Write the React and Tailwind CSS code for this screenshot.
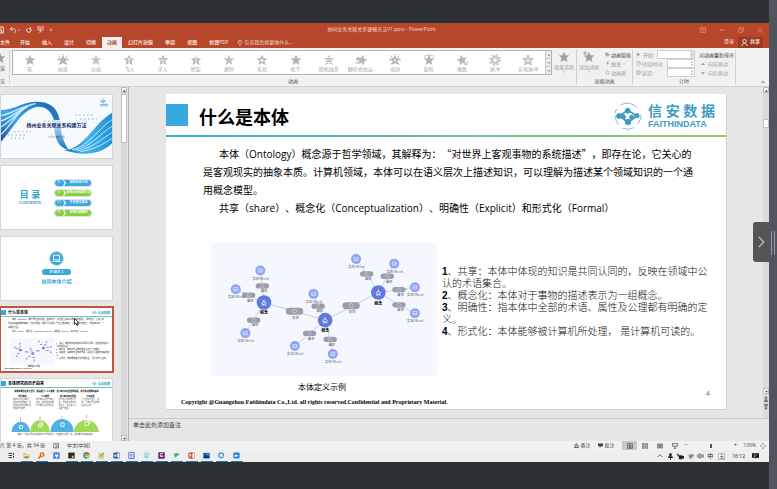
import React from "react";

const STAR = "M12 1.5l3.1 7 7.6.7-5.8 5 1.8 7.6L12 17.8l-6.7 4 1.8-7.6-5.8-5 7.6-.7z";

function Star({ className = "size-3", outline = false, children }) {
  return (
    <svg viewBox="0 0 24 24" className={className} fill={outline ? "none" : "currentColor"} stroke={outline ? "currentColor" : "none"} strokeWidth="2">
      <path d={STAR} />
      {children}
    </svg>
  );
}

const rays = <path d="M3 3l4 4M21 3l-4 4M3 21l4-4M21 21l-4-4M0 12h4M20 12h4M12 -1v3" stroke="currentColor" strokeWidth="2" />;

const effects = [
  { name: "无", icon: <Star /> },
  { name: "出现", icon: <Star>{rays}</Star> },
  { name: "淡出", icon: <Star className="size-3 opacity-70" /> },
  { name: "飞入", icon: <Star><path d="M12 18V9M9 12l3-3 3 3" stroke="#fff" strokeWidth="2" fill="none" /></Star> },
  { name: "浮入", icon: <Star><path d="M7 12h10M9 16h6" stroke="#fff" strokeWidth="2" /></Star> },
  { name: "劈裂", icon: <Star><path d="M12 2v17" stroke="#fff" strokeWidth="2" /></Star> },
  { name: "擦除", icon: <Star className="size-3 opacity-80" /> },
  { name: "形状", icon: <Star><circle cx="12" cy="13" r="3" fill="#fff" /></Star> },
  { name: "轮子", icon: <Star /> },
  { name: "随机线条", icon: <Star><path d="M2 7h20M2 12h20M2 17h20" stroke="#fff" strokeWidth="1.500" /></Star> },
  { name: "翻转式由远...", icon: <Star className="size-3 rotate-12"><path d="M-1 12l5-3v6zM0 20h6" stroke="currentColor" fill="currentColor" strokeWidth="2" /></Star> },
  { name: "缩放", icon: <Star>{rays}<circle cx="12" cy="13" r="2" fill="#fff" /></Star> },
  { name: "旋转", icon: <Star><path d="M3 7c1-6 7-6 9-3 2-3 8-3 9 3" stroke="currentColor" strokeWidth="2" fill="none" /></Star> },
  { name: "弹跳", icon: <Star className="size-3 -rotate-12"><path d="M15 21l3 3 6-8" stroke="currentColor" strokeWidth="2" fill="none" /></Star> },
  {
    name: "脉冲",
    icon: (
      <svg viewBox="0 0 24 24" className="size-3 opacity-70" fill="none" stroke="currentColor">
        <circle cx="12" cy="12" r="6" strokeWidth="5" />
        <circle cx="12" cy="12" r="10" strokeWidth="4" strokeDasharray="4 3.85" />
      </svg>
    ),
  },
  { name: "彩色脉冲", icon: <Star outline><path d="M12 7l1.5 4 4 .3-3 2.600 1 4-3.500-2-3.500 2 1-4-3-2.600 4-.3z" strokeWidth="1.500" /></Star> },
];

const tabs = ["文件", "开始", "插入", "设计", "切换", "动画", "幻灯片放映", "审阅", "视图", "新建PDF"];

const tabStyle = {
  文件: "pr-1 pt-px font-medium whitespace-nowrap",
  动画: "mt-px bg-[#f1f1f1] px-[5px] font-bold whitespace-nowrap text-[#b7472a]",
};

function TitleBar() {
  return (
    <div className="flex h-[13px] items-center text-[#f6d9d0]">
      <div className="flex flex-1 items-center gap-[5px]">
        <button aria-label="保存" className="-ml-1">
          <svg viewBox="0 0 24 24" className="size-2" fill="none" stroke="currentColor" strokeWidth="3"><path d="M2 3h20v18H2zM7 21v-7h10v7M7 3v6h10" /></svg>
        </button>
        <button aria-label="撤消">
          <svg viewBox="0 0 36 24" className="h-2 w-3" fill="none" stroke="currentColor" strokeWidth="3"><path d="M10 3L4 9l6 6M4 9h10c8 0 8 11 1 12" /><path d="M27 11h6l-3 4z" fill="currentColor" stroke="none" /></svg>
        </button>
        <button aria-label="恢复">
          <svg viewBox="0 0 24 24" className="size-[6px]" fill="none" stroke="currentColor" strokeWidth="4"><path d="M6 5a9 9 0 1 0 12 1M18 1v7h-7" /></svg>
        </button>
        <button aria-label="从头开始放映">
          <svg viewBox="0 0 24 24" className="size-[7px]" fill="none" stroke="currentColor" strokeWidth="2.500"><path d="M1 3h22M3 3v11h18V3M12 14v5M7 22l5-3 5 3M9 7l6 2-6 3z" /></svg>
        </button>
        <button aria-label="自定义快速访问工具栏">
          <svg viewBox="0 0 12 12" className="size-1" fill="currentColor"><path d="M1 2h10v2H1zM2 6h8l-4 4z" /></svg>
        </button>
      </div>
      <h1 className="text-[5px]">协同业务关联关系建模方法V1.pptx - PowerPoint</h1>
      <div className="flex flex-1 items-center justify-end gap-[13px] pr-[6px] text-[#d58a76]">
        <button aria-label="功能区显示选项"><svg viewBox="0 0 12 12" className="size-[6px]" fill="none" stroke="currentColor" strokeWidth="1.500"><path d="M1 1h10v10H1zM1 4h10M6 10V6M4 7l2-2 2 2" /></svg></button>
        <button aria-label="最小化"><svg viewBox="0 0 12 12" className="size-[6px]" stroke="currentColor" strokeWidth="2"><path d="M1 6h10" /></svg></button>
        <button aria-label="还原"><svg viewBox="0 0 12 12" className="size-[6px]" fill="none" stroke="currentColor" strokeWidth="1.500"><path d="M1 4h7v7H1zM4 4V1h7v7H8" /></svg></button>
        <button aria-label="关闭"><svg viewBox="0 0 12 12" className="size-[6px]" stroke="currentColor" strokeWidth="1.500"><path d="M1 1l10 10M11 1L1 11" /></svg></button>
      </div>
    </div>
  );
}

function TabBar() {
  return (
    <div className="flex h-3 items-stretch text-[5px] text-[#fbe9e4]">
      <nav className="flex">
        {tabs.map((t) => (
          <button key={t} className={tabStyle[t] ?? "px-[6px] pt-px font-medium whitespace-nowrap"}>
            {t}
          </button>
        ))}
      </nav>
      <label className="ml-1 flex items-center gap-[2px] pt-px">
        <svg viewBox="0 0 12 18" className="h-[6px] w-1" fill="none" stroke="currentColor" strokeWidth="2"><path d="M4 12c0-2-3-3-3-6a5 5 0 0 1 10 0c0 3-3 4-3 6zM4 16h4" /></svg>
        <input aria-label="操作说明搜索" placeholder="告诉我您想要做什么..." className="w-16 bg-transparent p-0 outline-none placeholder:text-[#f3cfc5]" />
      </label>
      <div className="ml-auto flex items-center pr-[6px]">
        <button className="mr-1">登录</button>
        <button className="flex h-[11px] items-center gap-[2px] bg-[#9a3a20] px-[3px] font-bold">
          <svg viewBox="0 0 16 16" className="size-[7px]" fill="none" stroke="currentColor" strokeWidth="2"><circle cx="8" cy="5" r="4" /><path d="M2 16c0-8 12-8 12 0" /></svg>
          共享
        </button>
      </div>
    </div>
  );
}

function GroupLabel({ children }) {
  return <div className="flex flex-1 items-center justify-center text-[5px] text-[#555]">{children}</div>;
}

function Spin({ id, label, children }) {
  return (
    <div className="flex h-[9px] items-center gap-px">
      {children}
      <label htmlFor={id} className="flex-1 whitespace-nowrap text-[#a0a0a0]">{label}</label>
      <div className="flex h-[9px] w-7 shrink-0 items-center border border-[#d0d0d0] bg-white">
        <input id={id} className="w-5 bg-transparent outline-none" />
        <svg viewBox="0 0 8 16" className="ml-auto h-[7px] w-1 text-[#aaa]" fill="currentColor"><path d="M1 6l3-4 3 4zM1 10h6l-3 4z" /></svg>
      </div>
    </div>
  );
}

function Ribbon() {
  return (
    <div className="flex h-[39px] border-b border-[#d2d2d2] bg-[#f1f1f1] text-[5px] leading-[6px] text-[#a0a0a0]">
      <div className="my-[2px] flex w-[10px] flex-col items-start overflow-hidden border-r border-[#d0d0d0]">
        <Star className="mt-[2px] -ml-[6px] size-3 shrink-0" />
        <span className="mt-px text-[#555]">览</span>
        <span className="mt-auto text-[#777]">览</span>
      </div>
      <div className="flex min-w-0 flex-1 flex-col pt-[2px]">
        <div className="flex h-[25px]">
          <div className="ml-[2px] flex min-w-0 flex-1 border border-[#b4b4b4] bg-white">
            <div className="flex min-w-0 flex-1">
              {effects.map((e) => (
                <button key={e.name} className="flex min-w-0 flex-1 basis-0 flex-col items-center justify-center whitespace-nowrap text-[#a8a8a8]">
                  <span className="text-[#b4b4b4]">{e.icon}</span>
                  {e.name}
                </button>
              ))}
            </div>
            <div className="flex w-[6px] flex-col border-l border-[#c8c8c8] bg-[#ececec]">
              {["上一行", "下一行", "更多效果"].map((n) => (
                <button key={n} aria-label={n} className="flex flex-1 items-center justify-center border-b border-[#d0d0d0] last:border-0">
                  <svg viewBox="0 0 8 8" className="size-1" fill="currentColor"><path d={n === "上一行" ? "M1 6l3-4 3 4z" : "M1 2h6L4 6z"} /></svg>
                </button>
              ))}
            </div>
          </div>
          <button className="flex w-6 flex-col items-center gap-px pt-px whitespace-nowrap">
            <Star className="size-3 shrink-0" />
            效果选项
            <svg viewBox="0 0 8 8" className="size-[2px]" fill="currentColor"><path d="M0 2h8L4 7z" /></svg>
          </button>
        </div>
        <GroupLabel>动画</GroupLabel>
      </div>
      <div className="my-[2px] flex w-14 flex-col border-l border-[#d0d0d0]">
        <div className="flex h-[27px] gap-1">
          <button className="flex w-6 shrink-0 flex-col items-center gap-px pt-px whitespace-nowrap">
            <Star className="size-3 shrink-0"><path d="M0 4h8M4 0v8" stroke="currentColor" strokeWidth="2" /></Star>
            添加动画
            <svg viewBox="0 0 8 8" className="size-[2px]" fill="currentColor"><path d="M0 2h8L4 7z" /></svg>
          </button>
          <div className="flex flex-col justify-around whitespace-nowrap">
            <button className="flex items-center gap-px text-[#444]">
              <svg viewBox="0 0 16 16" className="size-[5px]" fill="none" stroke="#35689b" strokeWidth="2"><path d="M4 2v12M1 5h6M9 3v11M9 9h6" /></svg>
              动画窗格
            </button>
            <button className="flex items-center gap-px">
              <svg viewBox="0 0 16 16" className="size-[5px]" fill="currentColor"><path d="M9 0L4 9h4l-2 7 7-10H9l3-6z" /></svg>
              触发
              <svg viewBox="0 0 8 8" className="ml-px size-[2px]" fill="currentColor"><path d="M0 2h8L4 7z" /></svg>
            </button>
            <button className="flex items-center gap-px"><Star className="size-[5px]" outline />动画刷</button>
          </div>
        </div>
        <GroupLabel>高级动画</GroupLabel>
      </div>
      <div className="my-[2px] flex w-[103px] flex-col border-l border-[#d0d0d0]">
        <div className="flex h-[27px] gap-1 pl-[3px]">
          <div className="flex w-[59px] shrink-0 flex-col">
            <div className="flex h-[9px] items-center gap-px">
              <svg viewBox="0 0 12 12" className="size-[5px] shrink-0" fill="currentColor"><path d="M2 1l9 5-9 5z" /></svg>
              <label htmlFor="start" className="flex-1 pl-px whitespace-nowrap">开始:</label>
              <div className="flex h-[9px] w-[38px] shrink-0 items-stretch border border-[#d0d0d0] bg-white">
                <select id="start" className="min-w-0 flex-1 appearance-none bg-transparent p-0"><option></option></select>
                <span className="flex w-1 items-center justify-center bg-[#e2e2e2]">
                  <svg viewBox="0 0 8 8" className="size-[2px]" fill="currentColor"><path d="M0 2h8L4 7z" /></svg>
                </span>
              </div>
            </div>
            <Spin id="duration" label="持续时间:">
              <svg viewBox="0 0 12 12" className="size-[5px] shrink-0" fill="none" stroke="currentColor" strokeWidth="1.500"><circle cx="6" cy="6" r="5" /><path d="M6 3v3h3" /></svg>
            </Spin>
            <Spin id="delay" label="延迟:">
              <svg viewBox="0 0 12 12" className="size-[5px] shrink-0" fill="none" stroke="currentColor" strokeWidth="1.500"><circle cx="6" cy="6" r="5" /><path d="M5 3v6M7 3v6" /></svg>
            </Spin>
          </div>
          <div className="flex flex-col justify-around whitespace-nowrap">
            <span className="text-[#444]">对动画重新排序</span>
            <button className="flex items-center gap-[3px] pl-[2px]"><svg viewBox="0 0 8 8" className="size-1" fill="currentColor"><path d="M0 6l4-5 4 5z" /></svg>向前移动</button>
            <button className="flex items-center gap-[3px] pl-[2px]"><svg viewBox="0 0 8 8" className="size-1" fill="currentColor"><path d="M0 2h8L4 7z" /></svg>向后移动</button>
          </div>
        </div>
        <GroupLabel>计时</GroupLabel>
      </div>
      <div className="my-[2px] flex w-[34px] items-end justify-end border-l border-[#d0d0d0] pr-1">
        <button aria-label="折叠功能区"><svg viewBox="0 0 12 12" className="size-1" fill="none" stroke="#444" strokeWidth="2.500"><path d="M1 9l5-5 5 5" /></svg></button>
      </div>
    </div>
  );
}

function LogoMark({ className }) {
  return (
    <svg viewBox="0 0 84 84" className={className} fill="#3d9cc4" stroke="#3d9cc4">
      <path d="M20 9a38 38 0 0 1 50 9M3 34a39 39 0 0 1 5-13M3 40a39 39 0 0 0 12 28M81 38a40 40 0 0 1-9 27M26 79a40 40 0 0 0 34-2" fill="none" strokeWidth="2" />
      <path d="M36 28L16 42M46 28l22 13M18 42l22 18M68 42L44 60" strokeWidth="5" fill="none" />
      <circle cx="41" cy="26" r="8" />
      <circle cx="15" cy="42" r="8" />
      <circle cx="69" cy="41" r="7" />
      <circle cx="42" cy="60" r="9" />
      <circle cx="29" cy="44" r="7" />
      <circle cx="53" cy="46" r="7" />
      <circle cx="37" cy="39" r="4" fill="#fff" stroke="none" />
      <circle cx="47" cy="36" r="3" fill="#fff" stroke="none" />
      <circle cx="41" cy="48" r="3" fill="#fff" stroke="none" />
    </svg>
  );
}

const hubs = [[177, 203], [361, 256], [521, 173]];
const relations = [[269, 229], [439, 212]];
const leaves = [
  { hub: 0, at: [166, 107], via: [172, 153] },
  { hub: 0, at: [92, 163], via: [131, 181] },
  { hub: 0, at: [121, 295], via: [146, 256] },
  { hub: 1, at: [326, 177], via: [340, 214] },
  { hub: 1, at: [270, 334], via: [314, 296] },
  { hub: 1, at: [384, 358], via: [376, 314] },
  { hub: 2, at: [454, 72], via: [486, 117] },
  { hub: 2, at: [569, 86], via: [548, 124] },
  { hub: 2, at: [631, 157], via: [583, 164] },
  { hub: 2, at: [631, 235], via: [583, 210] },
];

function OntologyGraph({ className, labels = true }) {
  return (
    <svg viewBox="18 24 679 400" className={className} textAnchor="middle">
      <rect x="18" y="24" width="679" height="400" fill="#f4f7fe" />
      <path d="M177 203L361 256L521 173" stroke="#b4b8c4" strokeWidth="2" fill="none" />
      {leaves.map(({ hub, at, via }) => (
        <g key={at.join()}>
          <path d={`M${hubs[hub].join(" ")}L${via.join(" ")}L${at.join(" ")}`} stroke="#bcc0cc" strokeWidth="2" fill="none" />
          <rect x={via[0] - 20} y={via[1] - 8} width="40" height="16" rx="8" fill="#9a9dab" />
          <circle cx={via[0]} cy={via[1]} r="5" fill="none" stroke="#d5d7de" strokeWidth="1.500" />
          <circle cx={at[0]} cy={at[1]} r="15" fill="#8fa5f3" />
          <path d={`M${at[0] - 6} ${at[1] - 5}h12v10h-12zM${at[0] - 5} ${at[1] + 1}h10`} fill="none" stroke="#e9eefe" strokeWidth="2" />
          {labels && <text x={via[0] + 5} y={via[1] + 19} fontSize="10" fill="#555">属性</text>}
          {labels && <text x={at[0] + 1} y={at[1] + 27} fontSize="10" fill="#666">实体/Word</text>}
        </g>
      ))}
      {relations.map(([x, y]) => (
        <g key={x}>
          <rect x={x - 26} y={y - 10} width="52" height="21" rx="10" fill="#9a9dab" />
          <circle cx={x} cy={y} r="6" fill="none" stroke="#d5d7de" strokeWidth="2" />
          {labels && <text x={x + 3} y={y + 24} fontSize="11" fill="#555">关系</text>}
        </g>
      ))}
      {hubs.map(([x, y]) => (
        <g key={x}>
          <circle cx={x} cy={y} r="22" fill="#6079dc" />
          <path d={`M${x} ${y - 9}v6M${x - 8} ${y + 2}l8-6 8 6M${x - 5} ${y + 3}v5h4v-4h4v4h4`} stroke="#fff" strokeWidth="2.500" fill="none" />
          {labels && <text x={x} y={y + 36} fontSize="12" fontWeight="bold" fill="#111">概念</text>}
        </g>
      ))}
    </svg>
  );
}

const points = [
  ["1", "、共享：本体中体现的知识是共同认同的，反映在领域中公认的术语集合。"],
  ["2", "、概念化：本体对于事物的描述表示为一组概念。"],
  ["3", "、明确性：指本体中全部的术语、属性及公理都有明确的定义。"],
  ["4", "、形式化：本体能够被计算机所处理， 是计算机可读的。"],
];

function Quote({ children }) {
  return <q className="before:font-['Noto_Sans_CJK_SC'] before:content-['“'] after:font-['Noto_Sans_CJK_SC'] after:content-['”']">{children}</q>;
}

function Slide() {
  return (
    <article className="flex h-[315px] w-full max-w-[560px] flex-col bg-white text-black shadow-[1px_1px_0_#cfcfcf] [text-spacing-trim:space-all]">
      <header className="flex h-[41px] items-start">
        <div className="mt-[10px] size-[22px] bg-[#38a9dc]" />
        <h2 className="mt-[10px] ml-[11px] text-[18px] leading-[26px] font-bold">什么是本体</h2>
        <div className="mt-2 mr-[11px] ml-auto flex items-center gap-[6px] text-[#3d9cc4]">
          <LogoMark className="size-7" />
          <div className="w-[67px]">
            <div className="font-['Liberation_Sans','Noto_Sans_CJK_SC',sans-serif] text-[14px] leading-4 font-bold [text-align-last:justify]">信安数据</div>
            <div className="font-['Liberation_Sans'] text-[9px] leading-[10px] font-bold">FAITHINDATA</div>
          </div>
        </div>
      </header>
      <div className="h-[2px] bg-linear-to-r from-[#38a9dc] to-[#8fd050]" />
      <section className="mt-[8px] pl-[37px] text-[10px] leading-[18px] whitespace-nowrap">
        <p className="pl-4">本体（Ontology）概念源于哲学领域，其解释为：<Quote>对世界上客观事物的系统描述</Quote>，即存在论，它关心的</p>
        <p>是客观现实的抽象本质。计算机领域，本体可以在语义层次上描述知识，可以理解为描述某个领域知识的一个通</p>
        <p>用概念模型。</p>
        <p className="pl-4">共享（share）、概念化（Conceptualization）、明确性（Explicit）和形式化（Formal）</p>
      </section>
      <div className="mt-[26px] flex gap-[5px] pl-[45px]">
        <figure className="w-[226px]">
          <OntologyGraph className="h-[133px] w-full" />
          <figcaption className="mt-[5px] pr-1 text-center text-[8px] leading-3">本体定义示例</figcaption>
        </figure>
        <ol className="mt-[23px] w-[272px] font-['Liberation_Sans','Noto_Sans_CJK_SC',sans-serif] text-[10px] leading-3 font-light text-[#111]">
          {points.map(([n, text]) => (
            <li key={n}><b className="font-black text-black">{n}</b>{text}</li>
          ))}
        </ol>
      </div>
      <footer className="flex items-start pr-4 pl-[15px]">
        <p className="mt-[5px] font-['Liberation_Serif'] text-[6px] leading-[8px] font-bold whitespace-nowrap">Copyright @Guangzhou Faithindata Co.,Ltd. all rights reserved.Confidential and Proprietary Material.</p>
        <span className="-mt-1 ml-auto text-[8px] leading-2 text-[#777]">4</span>
      </footer>
    </article>
  );
}

function CoverThumb() {
  return (
    <div className="relative h-full">
      <svg viewBox="0 0 336 189" preserveAspectRatio="none" className="absolute inset-0 size-full">
        <defs>
          <linearGradient id="left" x1="0" y1="1" x2="1" y2="0"><stop offset="0" stopColor="#274a9e" /><stop offset=".4" stopColor="#3fa8e6" /><stop offset="1" stopColor="#1560a8" /></linearGradient>
          <linearGradient id="right" x1="0" x2="1"><stop offset="0" stopColor="#1173bd" /><stop offset=".5" stopColor="#45b5ec" /><stop offset="1" stopColor="#2190d8" /></linearGradient>
          <linearGradient id="fall" x1="0" y1="0" x2="0" y2="1"><stop offset="0" stopColor="#d3edfa" /><stop offset="1" stopColor="#1173bd" /></linearGradient>
        </defs>
        <rect width="336" height="189" fill="#f7fafd" />
        <path d="M0 45C50 42 60 22 105 20c40-1 65 15 73 55l-18 0C150 40 125 30 98 38 60 52 40 95 0 140z" fill="url(#left)" />
        <path d="M0 62C40 55 65 30 105 26M0 78c35-12 60-40 95-50M0 96c30-18 50-45 80-60M0 118c25-22 40-50 62-70" stroke="#cdeafa" strokeWidth="4" fill="none" />
        <path d="M178 75h-18c2 45 5 80 45 90-14-20-24-45-27-90z" fill="url(#fall)" />
        <path d="M190 165c60 0 90-80 146-112v92c-40 40-95 35-146 20z" fill="url(#right)" />
        <path d="M215 164c50-8 80-65 121-90M220 166c50-8 80-50 116-72M230 168c45-8 75-35 106-56M240 170c40-6 70-22 96-40" stroke="#c5e9fb" strokeWidth="3" fill="none" />
        <path d="M20 120h60M30 130h40M225 60h60M240 72h50M40 110h50M230 84h30M130 78h30" stroke="#8cc4e8" strokeWidth="4" strokeDasharray="4 8" />
      </svg>
      <LogoMark className="absolute top-[3px] right-[6px] size-[6px]" />
      <p className="absolute top-[10px] right-1 text-[2px] leading-[2px] font-bold text-[#3d9cc4]">信安数据</p>
      <div className="relative pt-[26px] text-center text-[#14295c]">
        <p className="text-[5px] leading-2 font-bold">扬州业务关联关系构建方法</p>
        <p className="mt-[7px] text-[2px] leading-1">二〇二一年十一月</p>
      </div>
    </div>
  );
}

const chapters = [
  ["01", "协同本体介绍", "bg-[#38a9dc]"],
  ["02", "协同本体构建方法", "bg-[#86cf3b]"],
  ["03", "平台建设情况", "bg-[#38a9dc]"],
  ["04", "协同后期规划", "bg-[#86cf3b]"],
];

function ContentsThumb() {
  return (
    <div className="flex h-full items-center pr-[20px] pl-[18px]">
      <div className="text-center font-bold text-[#3a9fc9]">
        <p className="text-[9px] leading-[10px] whitespace-pre">目 录</p>
        <p className="font-['Liberation_Sans'] text-[4px] leading-[5px]">CONTENTS</p>
      </div>
      <ul className="ml-auto flex w-[38px] flex-col gap-[2px]">
        {chapters.map(([n, text, tone]) => (
          <li key={n} className={`flex h-2 items-center rounded-full border border-[#dde3e6] text-[3px] leading-none whitespace-nowrap text-white ${tone}`}>
            <span className="w-2 text-center">{n}</span>
            <svg viewBox="0 0 6 12" className="h-[6px] w-[3px] shrink-0" fill="#fff"><path d="M0 0h2l4 6-4 6H0l3-6z" /></svg>
            <span className="flex-1 text-center font-bold">{text}</span>
          </li>
        ))}
      </ul>
    </div>
  );
}

function PartThumb() {
  return (
    <div className="flex h-full flex-col items-center pt-[14px] text-[#38a9dc]">
      <div className="flex size-[15px] items-center justify-center rounded-full border border-[#dcdcdc] bg-[#38a9dc]">
        <svg viewBox="0 0 24 24" className="size-[9px]" fill="none" stroke="#fff" strokeWidth="2.500"><path d="M4 3h16v13H4zM1 20h22" /></svg>
      </div>
      <p className="mt-[3px] w-[29px] rounded-full bg-[#38a9dc] text-center font-['Liberation_Serif'] text-[4px] leading-[6px] font-bold text-white">PART 1</p>
      <p className="mt-[2px] text-[5px] leading-2 font-bold">协同本体介绍</p>
    </div>
  );
}

function ThumbHeader({ title }) {
  return (
    <div className="flex h-[9px] items-center border-b border-[#6fc5b5] pt-px">
      <span className="h-[5px] w-[5px] bg-[#38a9dc]" />
      <b className="ml-[2px] text-[4px] leading-1 text-black">{title}</b>
      <LogoMark className="ml-auto size-[5px]" />
      <b className="mr-[2px] ml-px text-[3px] leading-1 text-[#3d9cc4]">信安数据</b>
    </div>
  );
}

function CurrentThumb() {
  return (
    <div className="h-full overflow-hidden">
      <ThumbHeader title="什么是本体" />
      <div className="mt-px pl-[7px] text-[2px] leading-[4px] whitespace-nowrap text-[#222]">
        <p className="pl-1">本体（Ontology）概念源于哲学领域，其解释为：“对世界上客观事物的系统描述”，即存在论，它关心的</p>
        <p>是客观现实的抽象本质。计算机领域，本体可以在语义层次上描述知识，可以理解为描述某个领域知识的一个</p>
        <p>用概念模型。</p>
        <p className="pl-1">共享（share）、概念化（Conceptualization）、明确性（Explicit）和形式化（Formal）</p>
      </div>
      <div className="mt-1 flex gap-px pl-[9px]">
        <OntologyGraph className="h-[27px] w-[45px]" labels={false} />
        <ul className="mt-[4px] w-[54px] text-[2px] leading-[3px] text-[#222]">
          {points.map(([n, text]) => (
            <li key={n}><b>{n}</b>{text}</li>
          ))}
        </ul>
      </div>
      <p className="mt-px pl-[27px] text-[2px] leading-[2px]">本体定义示例</p>
      <p className="pl-[3px] font-['Liberation_Serif'] text-[1px] leading-[2px] font-bold">Copyright @Guangzhou Faithindata Co.,Ltd. all rights reserved.</p>
    </div>
  );
}

const eras = [
  ["哲学本体", "本体论是哲学概念，研究存在的本质，对世界客观存在物的系统描述与解释"],
  ["人工智能", "用于知识表示与知识组织，描述领域的概念与概念之间的关系"],
  ["语义网与知识图谱", "作为语义网的核心层次，为数据提供共享的语义，使机器可以理解与推理"],
  ["行业应用", "广泛应用于医疗、金融、公安等行业的知识建模之中"],
];

function HistoryThumb() {
  return (
    <div className="h-full overflow-hidden">
      <ThumbHeader title="本体研究的历史由来" />
      <p className="mt-[2px] text-center text-[2px] leading-[3px] font-bold whitespace-nowrap">本体的概念起源于哲学，随后被引入人工智能、语义网与知识图谱等领域，成为知识建模的基础</p>
      <div className="grid h-[20px] grid-cols-4 gap-1 px-[12px] pt-[2px] text-[2px] leading-[3px] text-[#555]">
        {eras.map(([name, text]) => (
          <div key={name}>
            <b className="block text-center whitespace-nowrap text-black">{name}</b>
            {text}
          </div>
        ))}
      </div>
      <svg viewBox="0 0 336 57" className="h-[19px] w-full">
        <path d="M59 12v15M118 8v12M184 8v8M259 5v10" stroke="#999" strokeWidth="2" />
        <path d="M32 57a28 31 0 0 1 56 0z" fill="#4fb2e0" />
        <path d="M88 57a30 35 0 0 1 60 0z" fill="#a0d957" />
        <path d="M150 57a35 39 0 0 1 70 0z" fill="#4fb2e0" />
        <path d="M220 57a39 43 0 0 1 77 0z" fill="#a0d957" />
        <path d="M56 38h9v9h-9zM113 33h9v9h-9zM117 29h9v9M181 30h10v10h-10zM254 26h11v11h-11zM258 22h11v11" fill="none" stroke="#fff" strokeWidth="2.500" />
      </svg>
      <p className="mt-[2px] px-[16px] text-[2px] leading-[2px] whitespace-nowrap text-[#444]">“本体”一词在不同学科领域中有不同的含义，但其核心思想一致，即对概念的明确说明</p>
    </div>
  );
}

const thumbs = [CoverThumb, ContentsThumb, PartThumb, CurrentThumb, HistoryThumb];

function ArrowBox({ label, up }) {
  return (
    <button aria-label={label} className="flex size-[6px] shrink-0 items-center justify-center border border-[#bbb] bg-white">
      <svg viewBox="0 0 8 8" className="size-[3px]" fill="#444"><path d={up ? "M0 7l4-5 4 5z" : "M0 2h8L4 7z"} /></svg>
    </button>
  );
}

function ThumbPane() {
  return (
    <aside className="flex w-[129px] shrink-0 overflow-hidden border-r border-[#b4b4b4]">
      <div className="flex h-full w-[121px] flex-col gap-2 overflow-hidden pt-2 pl-px">
        {thumbs.map((Thumb, i) => (
          <div
            key={i}
            className={i === 3 ? "h-[63px] w-[111px] shrink-0 bg-white ring-2 ring-[#c2553b]" : "h-[63px] w-[111px] shrink-0 bg-white ring-1 ring-[#d6d6d6]"}
          >
            <Thumb />
          </div>
        ))}
      </div>
      <div className="flex w-[6px] flex-col bg-[#d9d9d9]">
        <ArrowBox label="向上滚动" up />
        <div className="mt-px h-[49px] border border-[#c0c0c0] bg-white" />
        <div className="mt-auto"><ArrowBox label="向下滚动" /></div>
      </div>
    </aside>
  );
}

function Workspace() {
  return (
    <div className="flex min-h-0 flex-1 bg-[#e6e6e6]">
      <ThumbPane />
      <div className="flex min-w-0 flex-1 flex-col">
        <div className="flex min-h-0 flex-1">
          <main className="flex min-w-0 flex-1 justify-center pt-[7px]"><Slide /></main>
          <div className="flex w-[6px] flex-col items-center bg-[#dbdbdb]">
            <ArrowBox label="上一页" up />
            <div className="mt-[26px] h-[9px] w-[6px] border border-[#c0c0c0] bg-white" />
            <div className="mt-auto mb-2 flex flex-col items-center gap-[2px]">
              <ArrowBox label="下一页" />
              <button aria-label="上一张幻灯片" className="flex"><svg viewBox="0 0 8 12" className="h-[6px] w-1" fill="#777"><path d="M0 5l4-5 4 5zM0 10l4-5 4 5zM0 10h8v2H0z" /></svg></button>
              <button aria-label="下一张幻灯片" className="flex"><svg viewBox="0 0 8 12" className="h-[6px] w-1" fill="#777"><path d="M0 0h8v2H0zM0 2h8L4 7zM0 7h8l-4 5z" /></svg></button>
            </div>
          </div>
        </div>
        <div className="h-[23px] border-t border-[#c9c9c9] px-1 pt-[2px]">
          <textarea aria-label="备注" rows={1} placeholder="单击此处添加备注" className="block h-2 w-full resize-none overflow-hidden bg-transparent text-[6px] leading-2 outline-none placeholder:text-[#444]" />
        </div>
      </div>
    </div>
  );
}

function StatusBar() {
  return (
    <div className="flex h-[9px] shrink-0 items-center bg-[#f1f1f1] text-[5px] leading-[9px] whitespace-nowrap text-[#444]">
      <span className="text-[5px]">片 第 4 张，共 34 张</span>
      <button aria-label="拼写检查" className="ml-2"><svg viewBox="0 0 18 18" className="size-[6px]" fill="none" stroke="currentColor" strokeWidth="2"><path d="M9 3c-3-2-6-2-8-1v13c2-1 5-1 8 1 2-2 5-2 8-1V2c-3-1-6-1-8 1v13M11 12l6-8" /></svg></button>
      <button className="ml-2 text-[5px]">中文(中国)</button>
      <div className="ml-auto flex items-center">
        <button className="flex items-center gap-px"><svg viewBox="0 0 12 12" className="size-[5px]" fill="none" stroke="currentColor" strokeWidth="2"><path d="M3 5l3-4 3 4M0 7h12M0 11h12" /></svg>备注</button>
        <button className="ml-2 flex items-center gap-px"><svg viewBox="0 0 12 12" className="size-[5px]" fill="currentColor"><path d="M0 1h12v7H7l-3 4V8H0z" /></svg>批注</button>
        <button aria-label="普通视图" className="ml-2 flex h-[9px] w-[15px] items-center justify-center bg-[#c8c8c8]"><svg viewBox="0 0 18 18" className="size-[6px]" fill="none" stroke="currentColor" strokeWidth="2"><path d="M1 2h16v14H1zM6 6h6v4H6zM4 13h10" /></svg></button>
        <button aria-label="幻灯片浏览" className="ml-[5px]"><svg viewBox="0 0 18 18" className="size-[6px]" fill="none" stroke="currentColor" strokeWidth="2"><path d="M1 2h6v5H1zM11 2h6v5h-6zM1 11h6v5H1zM11 11h6v5h-6z" /></svg></button>
        <button aria-label="阅读视图" className="ml-[9px]"><svg viewBox="0 0 18 18" className="size-[6px]" fill="none" stroke="currentColor" strokeWidth="2"><path d="M1 3h7v12H1zM10 3h7v12h-7zM3 7h3M12 7h3M3 10h3M12 10h3" /></svg></button>
        <button aria-label="幻灯片放映" className="ml-[9px]"><svg viewBox="0 0 18 18" className="size-[6px]" fill="none" stroke="currentColor" strokeWidth="2"><path d="M0 2h18M2 2v8h14V2M9 10v5M5 16h8" /></svg></button>
        <button aria-label="缩小" className="ml-[6px] text-[6px]">−</button>
        <input type="range" aria-label="缩放" className="mx-1 h-1 w-[38px] appearance-none bg-transparent [&::-webkit-slider-thumb]:h-1 [&::-webkit-slider-thumb]:w-[2px] [&::-webkit-slider-thumb]:appearance-none [&::-webkit-slider-thumb]:bg-[#555]" />
        <button aria-label="放大" className="text-[6px]">+</button>
        <span className="ml-[6px]">100%</span>
        <button aria-label="适应窗口" className="mr-[3px] ml-1"><svg viewBox="0 0 18 18" className="size-[6px]" fill="none" stroke="currentColor" strokeWidth="2"><path d="M9 0v6M9 12v6M0 9h6M12 9h6" /></svg></button>
      </div>
    </div>
  );
}

function Letter({ children }) {
  return <text x="12" y="18" fontSize="16" fontWeight="bold" fill="#fff" textAnchor="middle">{children}</text>;
}

const apps = [
  ["任务视图", <g stroke="#222" strokeWidth="3"><path d="M2 5h12M2 12h12M2 19h12M19 3v7M19 13v7" /></g>],
  ["文件资源管理器", <g><path d="M1 3h8l3 4h11v14H1z" fill="#f5c244" /><path d="M1 9h22v4H1z" fill="#fce39a" /><path d="M6 22v-7h12v7h-4v-3h-4v3z" fill="#3a8fd6" /></g>],
  ["搜索", <g fill="none" stroke="#e0701d"><circle cx="14" cy="9" r="6" strokeWidth="5" /><path d="M9 14l-7 8" strokeWidth="6" /></g>],
  ["飞书", <g><rect x="1" y="1" width="22" height="22" rx="2" fill="#3d83dd" /><path d="M5 6l7 4 7-5-3 13-5 2z" fill="#fff" /></g>],
  ["便笺", <g><path d="M1 2h22v20H1z" fill="#292724" /><path d="M12 13h11l-9 9z" fill="#e8c81c" /></g>],
  ["Chrome", <g><circle cx="12" cy="12" r="11" fill="#2ba24c" /><path d="M2 7a11 11 0 0 1 20 0L12 12z" fill="#e04434" /><path d="M22 7a11 11 0 0 1-10 16l3-11z" fill="#f6c72c" /><circle cx="12" cy="12" r="5.500" fill="#fff" /><circle cx="12" cy="12" r="4" fill="#4a8af4" /></g>],
  ["记事本", <g><path d="M3 5h16v17H3z" fill="#d8e8a0" stroke="#7d8f3a" /><path d="M6 10h9M6 14h6" stroke="#67843a" strokeWidth="2" /><path d="M9 17L21 2" stroke="#e3952d" strokeWidth="4" /></g>],
  ["Word", <g><path d="M10 3h13v18H10z" fill="#fff" stroke="#2b5797" strokeWidth="2" /><path d="M1 3l14-2v22L1 21z" fill="#2b5797" /><path d="M4 8l2 8 2-7 2 7 2-8" fill="none" stroke="#fff" strokeWidth="2" /></g>],
  ["文档", <g><path d="M3 2h18v20H3z" fill="#fff" stroke="#3f62ae" strokeWidth="3" /><path d="M8 8h8v5H8zM8 17h8" fill="none" stroke="#3f62ae" strokeWidth="2" /></g>],
  ["笔记", <g><path d="M7 2l15 2-5 18-14-2z" fill="#8fd0d8" stroke="#c4e5e9" strokeWidth="2" /><path d="M10 8l7 1M9 12l6 1" stroke="#fff" strokeWidth="2" /></g>],
  ["Git", <g><rect x="1" y="1" width="22" height="22" fill="#6a1f62" /><Letter>G</Letter></g>],
  ["微信", <g fill="#34c45d"><ellipse cx="12" cy="10" rx="9" ry="7" /><path d="M6 14l-1 6 6-4z" /><ellipse cx="18" cy="16" rx="5" ry="4" fill="#fff" /></g>],
  ["PowerPoint", <g><path d="M10 3h13v18H10z" fill="#fff" stroke="#cf4a2b" strokeWidth="2" /><path d="M1 3l14-2v22L1 21z" fill="#cf4a2b" /><path d="M6 18V7h3q3 3 0 6H6" fill="none" stroke="#fff" strokeWidth="2.500" /></g>],
  ["照片", <g><rect x="1" y="3" width="22" height="18" fill="#1667b3" /><path d="M1 21l8-11 6 6 3-3 5 8z" fill="#0b2f5c" /><circle cx="17" cy="8" r="2" fill="#fff" /></g>],
  ["企业微信", <g fill="none"><circle cx="11" cy="11" r="8" stroke="#3b8fe0" strokeWidth="4" /><circle cx="18" cy="17" r="3" fill="#f5b93a" /><circle cx="12" cy="20" r="2" fill="#48b36b" /></g>],
  ["会议", <g><rect x="1" y="2" width="22" height="20" rx="5" fill="#1c78e8" /><path d="M5 9h9v7H5zM15 12l4-3v7z" fill="#fff" /></g>],
];

function Taskbar() {
  return (
    <div className="flex h-3 shrink-0 items-stretch bg-[#eeeeee] pl-1">
      {apps.map(([name, art], i) => (
        <button key={name} aria-label={name} className="flex w-[15px] items-center justify-center">
          <span className={i === 0 || i === 3 ? "flex h-full w-3 items-center justify-center border-b border-transparent" : "flex h-full w-3 items-center justify-center border-b border-[#2474b8]"}>
            <svg viewBox="0 0 24 24" className="size-[7px]">{art}</svg>
          </span>
        </button>
      ))}
      <div className="ml-auto flex items-center gap-[3px] pr-[10px] text-[6px] leading-none text-[#222]">
        <button aria-label="显示隐藏的图标"><svg viewBox="0 0 18 18" className="size-[6px]" fill="none" stroke="currentColor" strokeWidth="2"><path d="M2 12l7-7 7 7" /></svg></button>
        <svg viewBox="0 0 18 18" className="ml-px size-[7px]" fill="currentColor"><rect x="6" y="0" width="6" height="11" rx="3" /><path d="M3 9h12v4H3zM8 13h2v5H8z" /></svg>
        <svg viewBox="0 0 18 18" className="size-[7px]" fill="currentColor"><path d="M0 2h4v4h10v2h4v6h-4v2H5V9H2z" /></svg>
        <svg viewBox="0 0 18 18" className="ml-px size-[6px]" fill="none" stroke="currentColor" strokeWidth="2"><path d="M1 9a11 11 0 0 1 16 0M4 12a7 7 0 0 1 10 0M4 16L15 5M7 16h4" /></svg>
        <svg viewBox="0 0 22 18" className="h-[6px] w-[7px]" fill="none" stroke="currentColor" strokeWidth="2"><path d="M1 6h4l5-4v14l-5-4H1zM14 5q3 4 0 8M18 3q4 6 0 12" /></svg>
        <span>中</span>
        <span className="ml-[2px] border border-[#bbb] bg-white text-[5px] leading-[5px]">五</span>
        <time className="ml-1 text-[5px]">16:12</time>
        <button aria-label="通知" className="ml-1"><svg viewBox="0 0 21 18" className="h-[6px] w-[7px]" fill="#111"><path d="M0 1h21v13h-7l-3 4v-4H0z" /><path d="M4 6h12M4 10h7" stroke="#fff" strokeWidth="1.500" /></svg></button>
      </div>
    </div>
  );
}

export default function App() {
  return (
    <div className="flex h-screen bg-[#2d3135] font-['Open_Sans','Noto_Sans_CJK_SC',sans-serif]">
      <div className="relative flex min-w-0 flex-1 flex-col pt-[23px] pb-[27px]">
        <div className="shrink-0 bg-[#b7472a]">
          <TitleBar />
          <TabBar />
        </div>
        <Ribbon />
        <Workspace />
        <StatusBar />
        <Taskbar />
        <button aria-label="展开侧栏" className="absolute top-[222px] right-0 flex h-10 w-4 items-center justify-center rounded-l-[3px] bg-[#555555] text-[#c8c8c8]">
          <svg viewBox="0 0 18 30" className="h-[12px] w-[7px]" fill="none" stroke="currentColor" strokeWidth="3"><path d="M2 2l13 13L2 28" /></svg>
        </button>
      </div>
      <div className="flex w-2 shrink-0 justify-center gap-[2px] bg-[#50545b] pt-[231px]">
        <span className="h-6 w-px bg-[#969a9f]" />
        <span className="h-6 w-px bg-[#969a9f]" />
      </div>
      <svg viewBox="0 0 12 20" className="pointer-events-none absolute top-[318px] left-[74px] h-2 w-[5px]" fill="#fff" stroke="#111" strokeWidth="2"><path d="M1 1v15l4-3 2 6 3-1-2-6h4z" /></svg>
    </div>
  );
}
